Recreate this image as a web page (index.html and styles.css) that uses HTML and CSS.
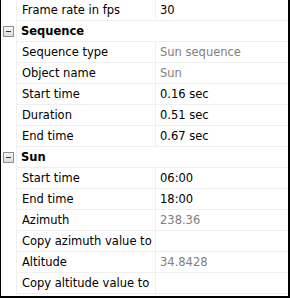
FILE: index.html
```html
<!DOCTYPE html>
<html>
<head>
<title>Properties</title>
<link rel="stylesheet" href="styles.css">
</head>
<body>
<div class="grid">
<div class="row"><div class="gutter"></div><div class="name">Frame rate in fps</div><div class="value">30</div></div>
<div class="row cat"><div class="gutter"><span class="toggle"></span></div><div class="title">Sequence</div></div>
<div class="row"><div class="gutter"></div><div class="name">Sequence type</div><div class="value ro">Sun sequence</div></div>
<div class="row"><div class="gutter"></div><div class="name">Object name</div><div class="value ro">Sun</div></div>
<div class="row"><div class="gutter"></div><div class="name">Start time</div><div class="value">0.16 sec</div></div>
<div class="row"><div class="gutter"></div><div class="name">Duration</div><div class="value">0.51 sec</div></div>
<div class="row"><div class="gutter"></div><div class="name">End time</div><div class="value">0.67 sec</div></div>
<div class="row cat"><div class="gutter"><span class="toggle"></span></div><div class="title">Sun</div></div>
<div class="row"><div class="gutter"></div><div class="name">Start time</div><div class="value">06:00</div></div>
<div class="row"><div class="gutter"></div><div class="name">End time</div><div class="value">18:00</div></div>
<div class="row"><div class="gutter"></div><div class="name">Azimuth</div><div class="value ro">238.36</div></div>
<div class="row"><div class="gutter"></div><div class="name">Copy azimuth value to</div><div class="value"></div></div>
<div class="row"><div class="gutter"></div><div class="name">Altitude</div><div class="value ro">34.8428</div></div>
<div class="row"><div class="gutter"></div><div class="name">Copy altitude value to</div><div class="value"></div></div>
</div>
</body>
</html>
```
FILE: styles.css
```css
body{
margin:0;
background:#fff;
font-family:"DejaVu Sans",sans-serif;
font-size:11.5px;
color:#000;}
.grid{
box-sizing:border-box;
width:290px;
height:298px;
border-left:1px solid #000;
border-right:2px solid #000;
border-bottom:2px solid #000;
overflow:hidden;
background:#fff;}
.row{
display:flex;
height:21px;}
.gutter{
width:15px;
flex:none;
border-right:1px solid #f0f0f0;
position:relative;}
.name,.value,.title{
height:20px;
line-height:20px;
border-bottom:1px solid #f0f0f0;
white-space:nowrap;
overflow:hidden;}
.name{
width:133px;
flex:none;
padding-left:5px;
border-right:1px solid #f0f0f0;}
.value{
flex:1;
padding-left:4px;}
.ro{color:#808080;}
.title{
flex:1;
padding-left:4px;
font-weight:bold;}
.toggle{
position:absolute;
left:2px;
top:5px;
width:9px;
height:9px;
border:1px solid #8e8f8f;
background:linear-gradient(#f4f4f4,#dcdcdc);}
.toggle:after{
content:"";
position:absolute;
left:2px;
top:4px;
width:5px;
height:1px;
background:#1e3a6a;}
```
